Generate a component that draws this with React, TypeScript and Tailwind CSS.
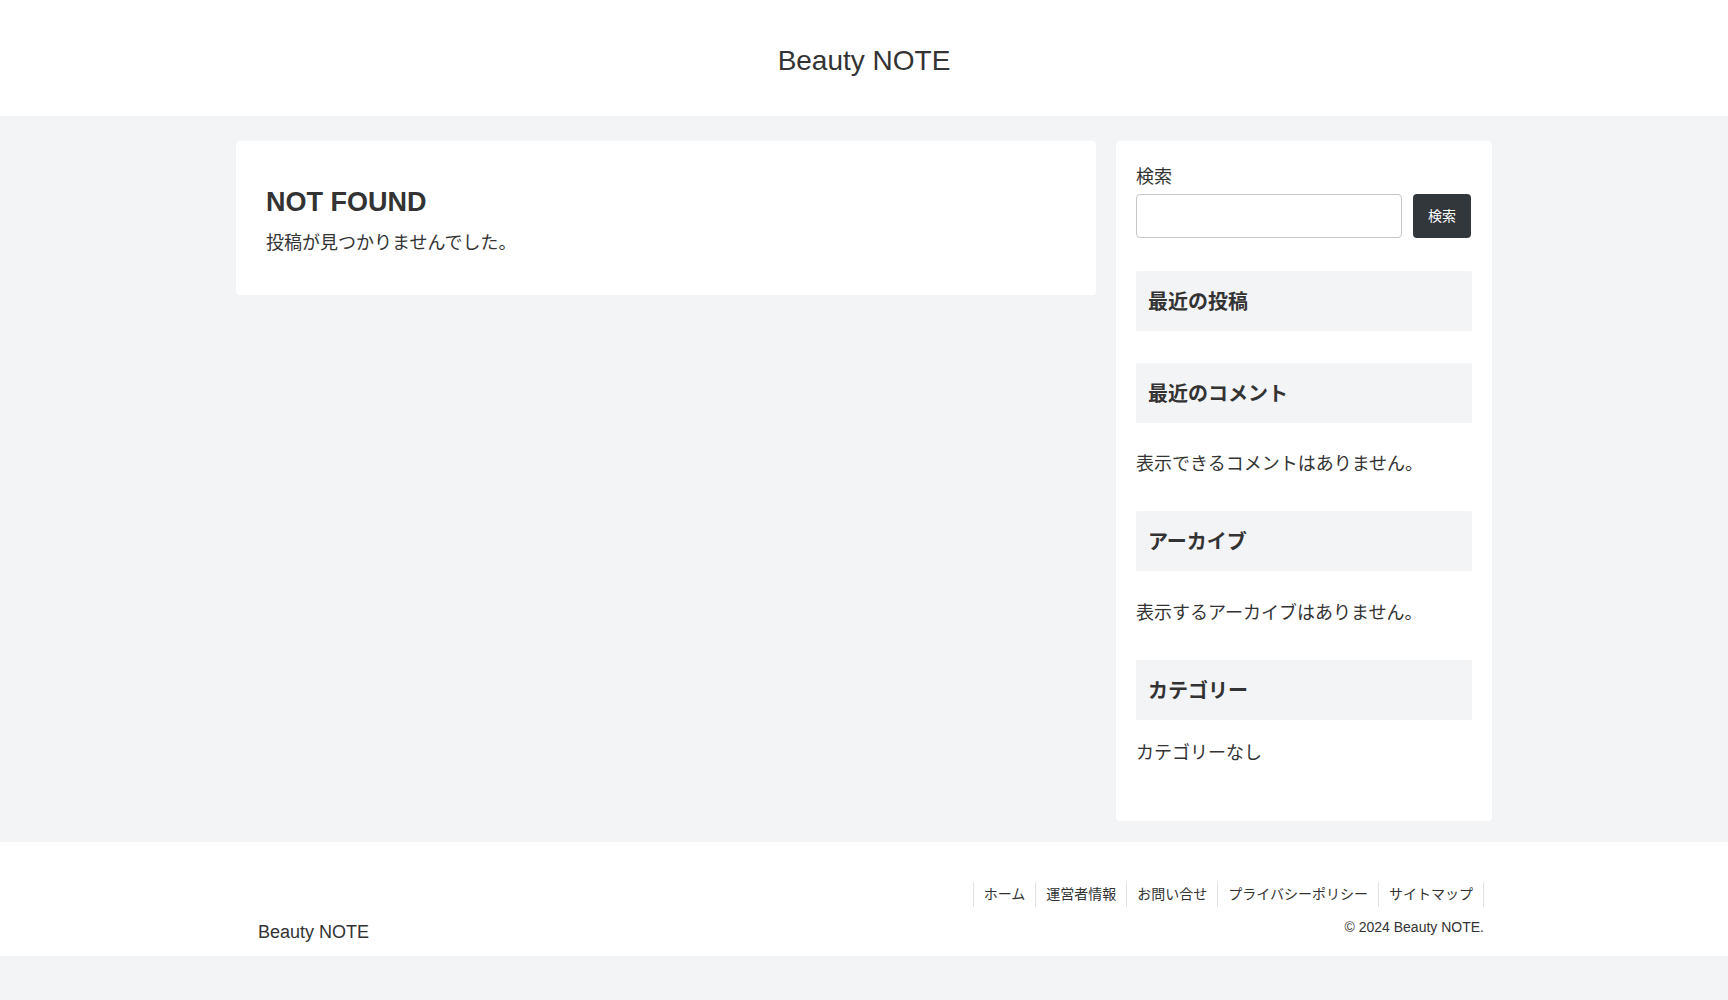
export default function App() {
  return (
    <div className="min-h-screen bg-[#f3f4f6] text-[#333] [font-family:'Liberation_Sans','Noto_Sans_CJK_JP',sans-serif]">
      <header className="flex h-[116px] items-center justify-center bg-white pt-[6px]">
        <div className="text-[28px] leading-[40px]">Beauty NOTE</div>
      </header>

      <main className="mx-auto flex w-[1256px] items-start gap-[20px] pt-[25px] pb-[21px]">
        <div className="w-[860px] rounded-[4px] bg-white px-[30px] pt-[41px] pb-[36px]">
          <h1 className="text-[27px] font-bold leading-[40px]">NOT FOUND</h1>
          <p className="mt-[5px] text-[18px] leading-[32px]">投稿が見つかりませんでした。</p>
        </div>

        <aside className="w-[376px] rounded-[4px] bg-white px-[20px] pt-[20px] pb-[52px]">
          <div>
            <label className="block text-[18px] leading-[32px]">検索</label>
            <div className="mt-[1px] flex gap-[11px]">
              <input className="h-[44px] w-[266px] rounded-[4px] border border-[#c7c7c7] bg-white px-3 outline-none" />
              <button className="h-[44px] w-[58px] rounded-[4px] bg-[#32373c] text-[14px] text-white">検索</button>
            </div>
          </div>

          <h2 className="mt-[33px] flex h-[60px] items-center rounded-[2px] bg-[#f3f4f6] px-[12px] pt-[1px] text-[20px] font-bold">
            最近の投稿
          </h2>

          <h2 className="mt-[32px] flex h-[60px] items-center rounded-[2px] bg-[#f3f4f6] px-[12px] pt-[1px] text-[20px] font-bold">
            最近のコメント
          </h2>
          <p className="mt-[25px] text-[18px] leading-[32px]">表示できるコメントはありません。</p>

          <h2 className="mt-[31px] flex h-[60px] items-center rounded-[2px] bg-[#f3f4f6] px-[12px] pt-[1px] text-[20px] font-bold">
            アーカイブ
          </h2>
          <p className="mt-[26px] text-[18px] leading-[32px]">表示するアーカイブはありません。</p>

          <h2 className="mt-[31px] flex h-[60px] items-center rounded-[2px] bg-[#f3f4f6] px-[12px] pt-[1px] text-[20px] font-bold">
            カテゴリー
          </h2>
          <ul className="mt-[17px] text-[18px] leading-[32px]">
            <li>カテゴリーなし</li>
          </ul>
        </aside>
      </main>

      <footer className="bg-white">
        <div className="mx-auto flex w-[1256px] items-end justify-between pt-[40px] pb-[8px] pl-[22px] pr-[8px]">
          <div className="text-[18px] leading-[32px]">Beauty NOTE</div>
          <div className="mb-[8px] flex flex-col items-end">
            <nav className="flex text-[14px] leading-[25px]">
              {["ホーム", "運営者情報", "お問い合せ", "プライバシーポリシー", "サイトマップ"].map((t, i, a) => (
                <a
                  key={t}
                  className={
                    i === a.length - 1
                      ? "border-x border-[#e2e2e2] px-[10px]"
                      : "border-l border-[#e2e2e2] px-[10px]"
                  }
                >
                  {t}
                </a>
              ))}
            </nav>
            <div className="mt-[8px] text-[14px] leading-[25px]">© 2024 Beauty NOTE.</div>
          </div>
        </div>
      </footer>
    </div>
  );
}
